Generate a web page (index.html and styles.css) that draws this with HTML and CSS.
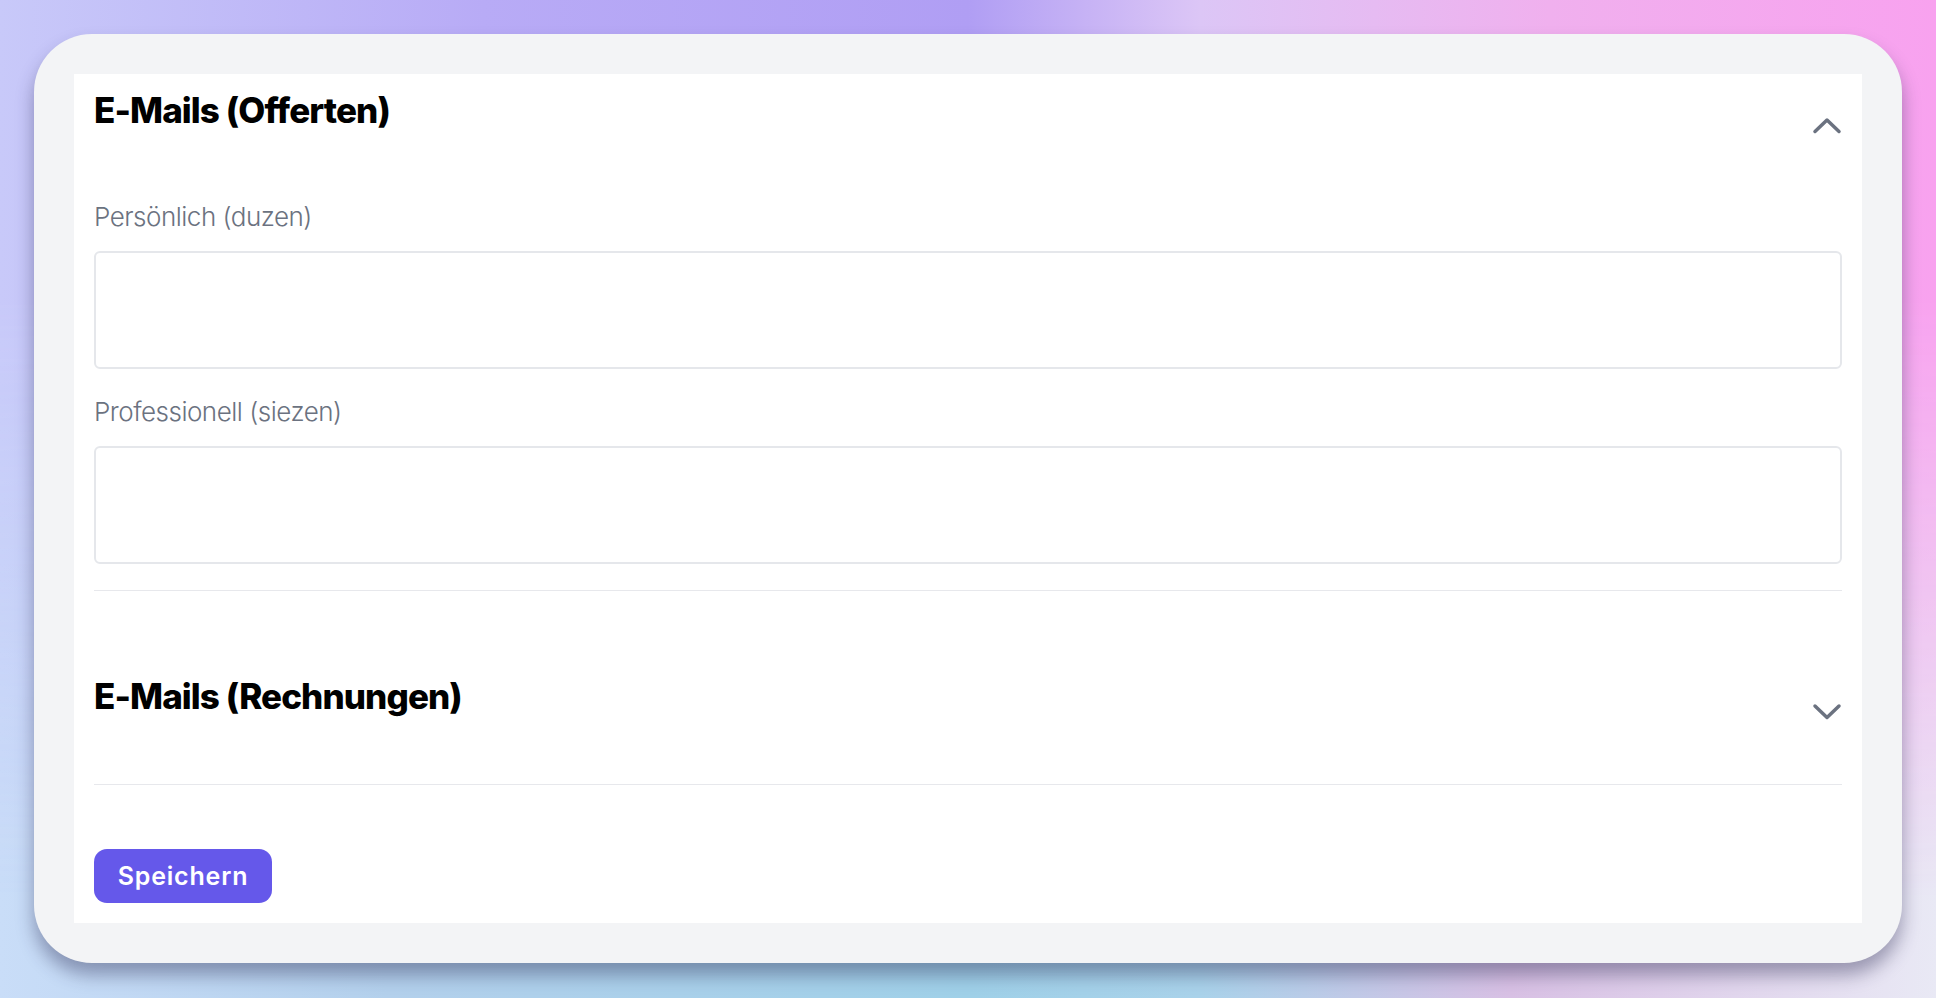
FILE: index.html
```html
<!DOCTYPE html>
<html lang="de">
<head>
<meta charset="utf-8">
<title>E-Mails</title>
<link rel="stylesheet" href="styles.css">
</head>
<body>
<div class="backdrop"></div>
<main class="card">
  <div class="panel">
    <section class="section section-open">
      <div class="section-header">
        <h2 class="section-title">E-Mails (Offerten)</h2>
        <svg class="chevron" width="32" height="20" viewBox="0 0 32 20" aria-hidden="true"><polyline points="4,15.5 16,4 28,15.5" /></svg>
      </div>
      <div class="field">
        <label class="field-label" for="du">Persönlich (duzen)</label>
        <textarea id="du" class="field-input"></textarea>
      </div>
      <div class="field">
        <label class="field-label" for="sie">Professionell (siezen)</label>
        <textarea id="sie" class="field-input"></textarea>
      </div>
    </section>
    <section class="section section-closed">
      <div class="section-header">
        <h2 class="section-title">E-Mails (Rechnungen)</h2>
        <svg class="chevron" width="32" height="20" viewBox="0 0 32 20" aria-hidden="true"><polyline points="4,4 16,15.5 28,4" /></svg>
      </div>
    </section>
    <button class="save-button" type="button">Speichern</button>
  </div>
</main>
</body>
</html>
```
FILE: styles.css
```css
* { box-sizing: border-box; }

html, body {
  margin: 0;
  height: 998px;
}

body {
  position: relative;
  padding: 34px;
  font-family: Inter, "Noto Sans", sans-serif;
  background: linear-gradient(90deg, #c9ddf8 0%, #b3d0ec 20%, #9fd0e8 50%, #a9d2ea 62%, #d8c0e4 78%, #e9e9f5 100%);
  overflow: hidden;
}

.backdrop {
  position: absolute;
  inset: 0;
  background: linear-gradient(90deg, #c8c9f9 0%, #b8abf6 25%, #b09ef4 50%, #dcc6f6 62%, #f0b0ee 80%, #f8a2ef 100%);
  -webkit-mask-image: linear-gradient(to bottom, #000 0%, #000 30%, transparent 90%);
  mask-image: linear-gradient(to bottom, #000 0%, #000 30%, transparent 90%);
}

.card {
  position: relative;
  background: #f3f4f6;
  border-radius: 58px;
  padding: 40px;
  box-shadow: 0 12px 18px rgba(40, 40, 80, 0.4);
}

.panel {
  background: #ffffff;
  padding: 16px 20px 20px;
  display: flex;
  flex-direction: column;
  align-items: flex-start;
}

.section {
  width: 100%;
  border-bottom: 1px solid #e7e8ec;
}

.section-open { padding-bottom: 26px; }

.section-closed { padding-top: 85px; }

.section-header {
  display: flex;
  justify-content: space-between;
  align-items: flex-start;
  height: 40px;
  margin-bottom: 68.5px;
}

.section-closed .section-header { margin-bottom: 68px; }

.section-title {
  margin: 0;
  font-size: 35px;
  line-height: 40px;
  font-weight: 800;
  color: #000;
  letter-spacing: -0.9px;
}

.chevron {
  margin-top: 25.5px;
  margin-right: -1px;
  fill: none;
  stroke: #6b7280;
  stroke-width: 3.5;
  stroke-linecap: round;
  stroke-linejoin: round;
}

.field + .field { margin-top: 24.5px; }

.field-label {
  display: block;
  font-size: 26px;
  line-height: 36px;
  font-weight: 300;
  color: #6b7280;
  letter-spacing: -0.5px;
  margin-bottom: 16.5px;
}

.field-input {
  display: block;
  width: 100%;
  height: 118px;
  border: 2px solid #e5e7eb;
  border-radius: 6px;
  resize: none;
  background: #fff;
  font-family: inherit;
  font-size: 24px;
  outline: none;
}

.save-button {
  margin-top: 64px;
  width: 178px;
  height: 54px;
  border: none;
  border-radius: 13px;
  background: #6558ea;
  color: #fff;
  font-family: inherit;
  font-size: 25px;
  font-weight: 600;
  letter-spacing: 0.8px;
  padding: 0;
  cursor: pointer;
}
```
